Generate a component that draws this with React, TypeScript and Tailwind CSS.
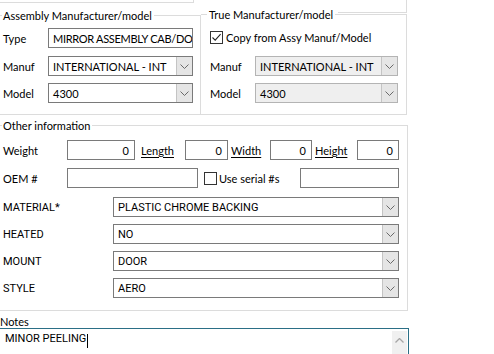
import React from "react";

const UI = "font-['Lato',sans-serif] text-[11px] leading-[13px]";
const TH = "font-['Roboto',sans-serif] text-[11px] leading-[13px]";

function ChevDown() {
  return (
    <svg width="9" height="5" viewBox="0 0 9 5">
      <path d="M0.5 0.5 L4.5 4.5 L8.5 0.5" fill="none" stroke="#6a6a6a" strokeWidth="1" />
    </svg>
  );
}

function Combo({ cls, value, disabled, font }: { cls: string; value: string; disabled?: boolean; font: string }) {
  return (
    <div
      className={`flex h-[20px] shrink-0 border ${cls} ${
        disabled ? "border-[#b4b4b4] bg-[#efefef]" : "border-[#7a7a7a] bg-white"
      }`}
    >
      <div className={`flex min-w-0 flex-1 items-center overflow-hidden whitespace-nowrap pl-[4px] text-black ${font}`}>
        {value}
      </div>
      <div
        className={`flex w-[16px] items-center justify-center border-l ${
          disabled ? "border-[#c4c4c4] bg-[#e6e6e6]" : "border-[#c4c4c4] bg-[#e5e5e5]"
        }`}
      >
        <ChevDown />
      </div>
    </div>
  );
}

function TextBox({ cls, value, right }: { cls: string; value?: string; right?: boolean }) {
  return (
    <div
      className={`flex h-[20px] shrink-0 items-center overflow-hidden whitespace-nowrap border border-[#7a7a7a] bg-white ${cls} ${
        right ? "justify-end pr-[5px]" : "pl-[4px]"
      } ${UI}`}
    >
      {value}
    </div>
  );
}

function CheckBox({ checked }: { checked?: boolean }) {
  return (
    <div className="flex h-[13px] w-[13px] shrink-0 items-center justify-center border border-[#333333] bg-white">
      {checked && (
        <svg width="11" height="11" viewBox="0 0 11 11">
          <path d="M1.5 5.5 L4.2 8.2 L9.6 2.2" fill="none" stroke="#222222" strokeWidth="1.1" />
        </svg>
      )}
    </div>
  );
}

export default function App() {
  return (
    <div className={`relative h-[354px] w-[494px] overflow-hidden bg-white text-black ${UI}`}>
      {/* fragments of widgets above */}
      <div className="absolute left-0 top-[2px] h-px w-[194px] bg-[#dcdcdc]" />
      <div className="absolute left-[193px] top-0 h-[3px] w-px bg-[#dcdcdc]" />
      <div className="absolute left-[406px] top-0 h-[12px] w-px bg-[#dcdcdc]" />
      <div className="absolute left-[338px] top-[12px] h-px w-[69px] bg-[#dcdcdc]" />

      <div className="flex flex-col">
        {/* row 1 */}
        <div className="mt-[14px] flex">
          <div className="relative mt-px h-[100px] w-[201px] border-b border-r border-t border-[#dcdcdc]">
            <div className="absolute left-[2px] top-[-7px] bg-white pl-px pr-[2px]">Assembly Manufacturer/model</div>
            <div className="flex flex-col pt-[12px]">
              <div className="flex h-[20px] items-center">
                <div className="w-[48px] pl-[3px]">Type</div>
                <div className="flex h-[20px] w-[145px] shrink-0 items-center overflow-hidden whitespace-nowrap border border-[#7a7a7a] bg-white pl-[4px] tracking-[-0.3px]">
                  MIRROR ASSEMBLY CAB/DO
                </div>
              </div>
              <div className="mt-[8px] flex h-[20px] items-center">
                <div className="w-[48px] pl-[3px]">Manuf</div>
                <Combo cls="w-[145px]" value="INTERNATIONAL - INT" font={UI} />
              </div>
              <div className="mt-[7px] flex h-[20px] items-center">
                <div className="w-[48px] pl-[3px]">Model</div>
                <Combo cls="w-[145px]" value="4300" font={UI} />
              </div>
            </div>
          </div>
          <div className="relative h-[101px] w-[206px] border-b border-r border-t border-[#dcdcdc]">
            <div className="absolute left-[6px] top-[-7px] bg-white px-[2px]">True Manufacturer/model</div>
            <div className="flex flex-col pt-[16px]">
              <div className="flex h-[13px] items-center pl-[9px]">
                <CheckBox checked />
                <div className="ml-[3px]">Copy from Assy Manuf/Model</div>
              </div>
              <div className="mt-[12px] flex h-[20px] items-center">
                <div className="w-[54px] pl-[9px]">Manuf</div>
                <Combo cls="w-[143px]" value="INTERNATIONAL - INT" font={UI} disabled />
              </div>
              <div className="mt-[7px] flex h-[20px] items-center">
                <div className="w-[54px] pl-[9px]">Model</div>
                <Combo cls="w-[143px]" value="4300" font={UI} disabled />
              </div>
            </div>
          </div>
        </div>

        {/* row 2 */}
        <div className="relative mt-[10px] h-[186px] w-[408px] border-b border-r border-t border-[#dcdcdc]">
          <div className="absolute left-[2px] top-[-7px] bg-white pl-px pr-[2px]">Other information</div>
          <div className="flex flex-col pt-[14px]">
            <div className="flex h-[20px] items-center">
              <div className="w-[67px] pl-[3px]">Weight</div>
              <TextBox cls="w-[68px]" value="0" right />
              <div className="w-[50px] pl-[6px]">
                <span className="underline underline-offset-[2px]">Length</span>
              </div>
              <TextBox cls="w-[43px]" value="0" right />
              <div className="w-[42px] pl-[3px]">
                <span className="underline underline-offset-[2px]">Width</span>
              </div>
              <TextBox cls="w-[42px]" value="0" right />
              <div className="w-[45px] pl-[3px]">
                <span className="underline underline-offset-[2px]">Height</span>
              </div>
              <TextBox cls="w-[42px]" value="0" right />
            </div>
            <div className="mt-[8px] flex h-[20px] items-center">
              <div className="w-[67px] pl-[3px]">OEM #</div>
              <TextBox cls="w-[131px]" />
              <div className="ml-[6px]">
                <CheckBox />
              </div>
              <div className="w-[83px] pl-[2px]">Use serial #s</div>
              <TextBox cls="w-[99px]" />
            </div>
            {[
              ["MATERIAL*", "PLASTIC CHROME BACKING"],
              ["HEATED", "NO"],
              ["MOUNT", "DOOR"],
              ["STYLE", "AERO"],
            ].map(([label, value], i) => (
              <div key={label} className={`flex h-[20px] items-center ${i === 0 ? "mt-[9px]" : "mt-[7px]"}`}>
                <div className={`w-[113px] pl-[3px] ${TH}`}>{label}</div>
                <Combo cls="w-[286px]" value={value} font={TH} />
              </div>
            ))}
          </div>
        </div>

        {/* notes */}
        <div className="mt-[4px] h-[13px] leading-[13px]">Notes</div>
        <div className="ml-[-1px] flex h-[40px] w-[410px] border border-[#2b6f86]">
          <div className={`flex-1 pl-[5px] pt-[3px] ${TH}`}>
            <span>MINOR PEELING</span>
            <span className="ml-px inline-block h-[14px] w-px translate-y-[2px] bg-black align-top" />
          </div>
          <div className="mr-px mt-[2px] flex w-[15px] justify-center bg-[#f0f0f0] pt-[7px]">
            <svg width="9" height="5" viewBox="0 0 9 5">
              <path d="M0.5 4.5 L4.5 0.5 L8.5 4.5" fill="none" stroke="#a6a6a6" strokeWidth="1.3" />
            </svg>
          </div>
        </div>
      </div>
    </div>
  );
}
